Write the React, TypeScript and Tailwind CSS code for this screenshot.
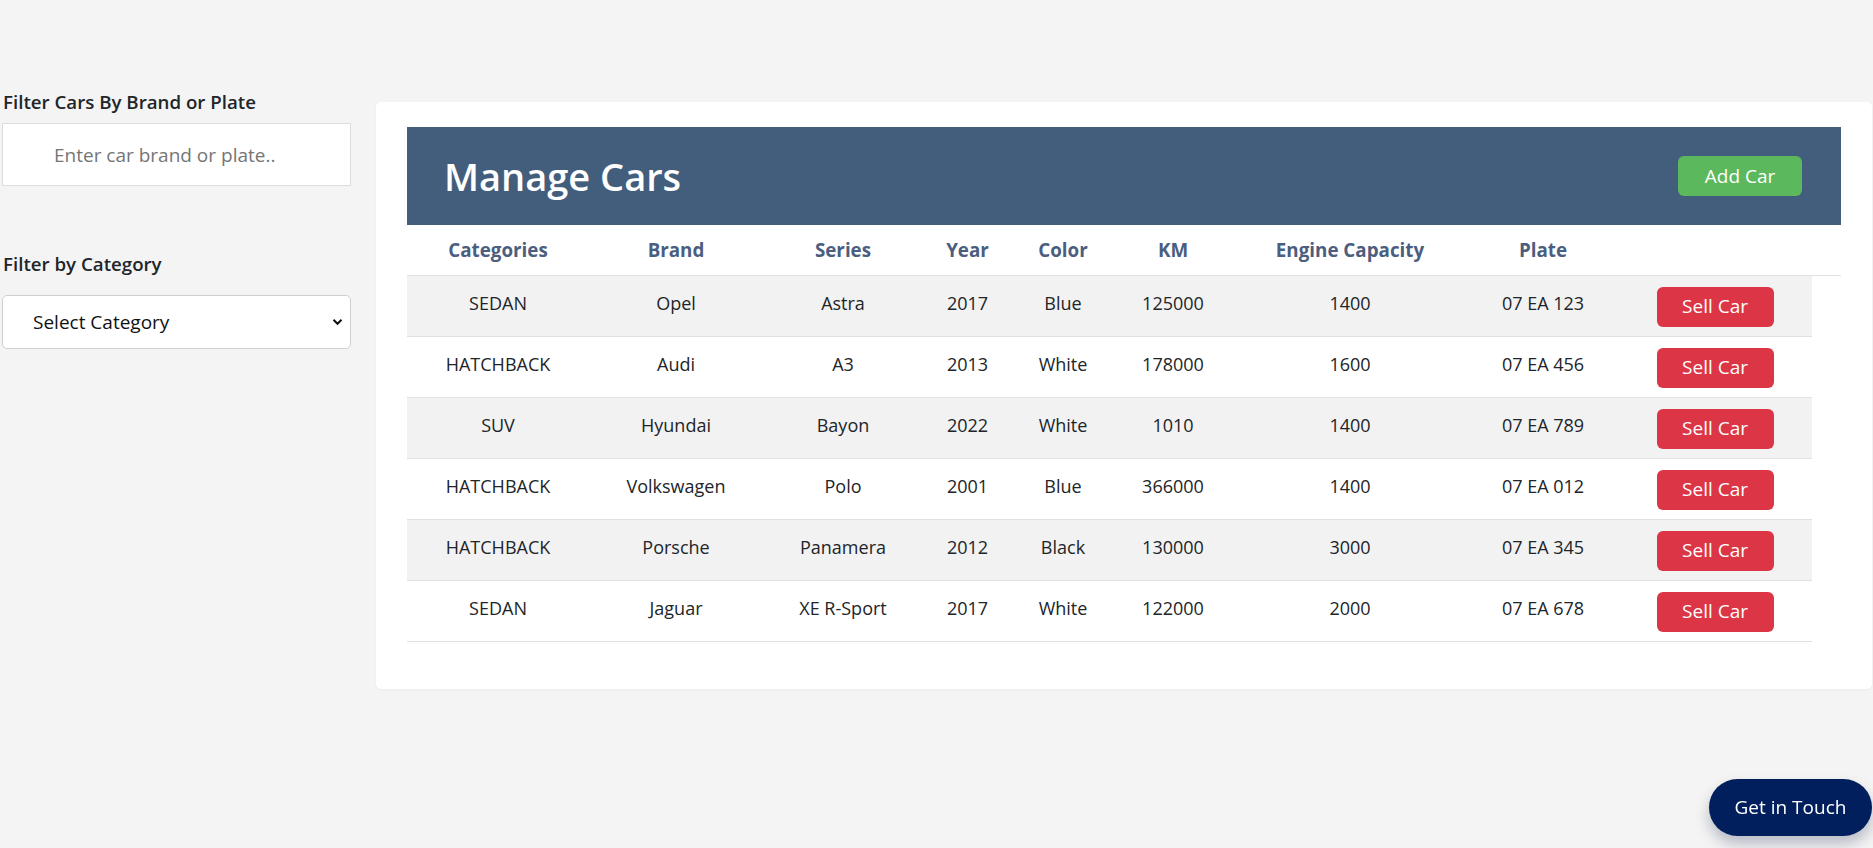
import React from "react";

const cars = [
  ["SEDAN", "Opel", "Astra", "2017", "Blue", "125000", "1400", "07 EA 123"],
  ["HATCHBACK", "Audi", "A3", "2013", "White", "178000", "1600", "07 EA 456"],
  ["SUV", "Hyundai", "Bayon", "2022", "White", "1010", "1400", "07 EA 789"],
  ["HATCHBACK", "Volkswagen", "Polo", "2001", "Blue", "366000", "1400", "07 EA 012"],
  ["HATCHBACK", "Porsche", "Panamera", "2012", "Black", "130000", "3000", "07 EA 345"],
  ["SEDAN", "Jaguar", "XE R-Sport", "2017", "White", "122000", "2000", "07 EA 678"],
];

const headers = ["Categories", "Brand", "Series", "Year", "Color", "KM", "Engine Capacity", "Plate", ""];

export default function App() {
  return (
    <div
      className="min-h-screen bg-[#f4f4f4] text-[#212529]"
      style={{ fontFamily: '"Open Sans", "Noto Sans", sans-serif' }}
    >
      <div className="flex items-start">
        <aside className="ml-[2px] w-[349px] pt-[88px]">
          <label className="block pl-[1px] text-[18.7px] font-semibold leading-[28px] text-[#212529]">
            Filter Cars By Brand or Plate
          </label>
          <input
            className="mt-[7px] block h-[63px] w-full border border-[#dddddd] bg-white pl-[51px] text-[19px] text-[#212529] outline-none placeholder:text-[#757575]"
            placeholder="Enter car brand or plate.."
          />
          <label className="mt-[64px] block pl-[1px] text-[18.7px] font-semibold leading-[28px] text-[#212529]">
            Filter by Category
          </label>
          <div className="relative mt-[17px] h-[54px]">
            <select className="block h-[54px] w-full appearance-none rounded-[5px] border border-[#cfcfcf] bg-white pl-[30px] text-[19px] text-[#111] outline-none">
              <option>Select Category</option>
            </select>
            <svg
              className="pointer-events-none absolute right-[8px] top-[23px]"
              width="11"
              height="8"
              viewBox="0 0 11 8"
            >
              <path d="M1.5 1.8 L5.5 5.8 L9.5 1.8" fill="none" stroke="#111" strokeWidth="2" />
            </svg>
          </div>
        </aside>

        <main className="ml-[25px] mr-[1px] mt-[102px] flex-1 rounded-[5px] bg-white px-[31px] pb-[47px] pt-[25px] shadow-[0_1px_3px_rgba(0,0,0,0.04)]">
          <div className="flex h-[98px] items-center justify-between bg-[#435e7c] pl-[37px] pr-[39px]">
            <h1 className="text-[38px] font-semibold leading-none text-white">Manage Cars</h1>
            <button className="h-[40px] w-[124px] rounded-[6px] bg-[#5cb85c] text-[19px] text-white">
              Add Car
            </button>
          </div>

          <div className="grid h-[51px] grid-cols-[182px_174px_160px_89px_102px_118px_236px_150px_1fr] items-center border-b border-[#dee2e6]">
            {headers.map((h, i) => (
              <div key={i} className="text-center text-[18.8px] font-bold text-[#4b5e7f]">
                {h}
              </div>
            ))}
          </div>

          <div className="w-[1405px]">
            {cars.map((row, r) => (
              <div
                key={r}
                className={`grid h-[61px] grid-cols-[182px_174px_160px_89px_102px_118px_236px_150px_194px] items-center border-b border-[#dee2e6] ${
                  r % 2 === 0 ? "bg-[#f2f2f2]" : "bg-white"
                }`}
              >
                {row.map((c, i) => (
                  <div key={i} className="-mt-[6px] text-center text-[18px] text-[#212529]">
                    {c}
                  </div>
                ))}
                <div className="flex justify-center pt-[1px]">
                  <button className="h-[40px] w-[117px] rounded-[6px] bg-[#dc3545] text-[19px] text-white">
                    Sell Car
                  </button>
                </div>
              </div>
            ))}
          </div>
        </main>
      </div>

      <button className="fixed bottom-[12px] right-[1px] h-[57px] w-[163px] rounded-full bg-[#001f5c] text-[19px] text-white shadow-[0_8px_14px_rgba(0,20,60,0.25)]">
        Get in Touch
      </button>
    </div>
  );
}
